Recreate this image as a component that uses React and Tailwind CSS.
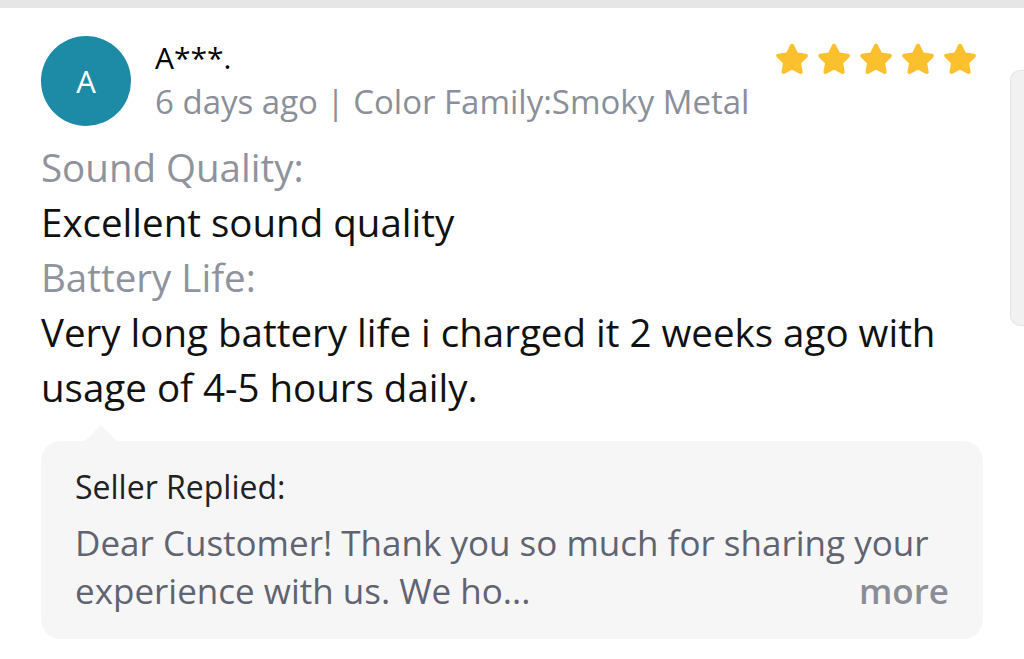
import React from 'react';

const FONT = { fontFamily: '"Open Sans", "Noto Sans", Arial, sans-serif' };

function Star() {
  return (
    <svg viewBox="0 0 24 24" className="w-[40px] h-[40px]" fill="#fbc02d">
      <path d="M12 2.2c.5 0 .9.3 1.1.7l2.3 4.6 5.1.8c1 .1 1.4 1.3.7 2l-3.7 3.6.9 5.1c.2 1-.9 1.7-1.7 1.2L12 17.8l-4.6 2.4c-.9.5-1.9-.3-1.7-1.2l.9-5.1-3.7-3.6c-.7-.7-.3-1.9.7-2l5.1-.8 2.2-4.6c.2-.4.6-.7 1.1-.7z" />
    </svg>
  );
}

export default function App() {
  return (
    <div className="relative w-[1024px] h-[659px] bg-white overflow-hidden" style={FONT}>
      <div className="h-[8px] bg-[#e6e6e6]" />

      {/* peeking panel on the right edge */}
      <div className="absolute left-[1010px] top-[70px] w-[40px] h-[256px] bg-[#f1f1f1] border border-[#e4e4e4] rounded-[10px]" />

      <div className="pl-[41px] pr-[41px] pt-[28px]">
        {/* header */}
        <div className="flex items-start">
          <div className="w-[90px] h-[90px] rounded-full bg-[#1d8ba6] flex items-center justify-center text-white text-[31px] shrink-0">
            A
          </div>
          <div className="ml-[24px] flex-1">
            <div className="text-[30px] text-black leading-[40px] mt-[2px]">A***.</div>
            <div className="text-[33px] text-[#8a8f99] leading-[40px] mt-[4px]">6 days ago | Color Family:Smoky Metal</div>
          </div>
          <div className="flex gap-[2px] mt-[4px] mr-[3px]">
            <Star /><Star /><Star /><Star /><Star />
          </div>
        </div>

        {/* review body */}
        <div className="mt-[14px] text-[38.5px] leading-[55px]">
          <div className="text-[#8e939d]">Sound Quality:</div>
          <div className="text-[#111]">Excellent sound quality</div>
          <div className="text-[#8e939d]">Battery Life:</div>
          <div className="text-[#111] pr-[20px]">Very long battery life i charged it 2 weeks ago with usage of 4-5 hours daily.</div>
        </div>

        {/* seller reply */}
        <div className="relative mt-[26px] bg-[#f6f6f7] rounded-[20px] px-[34px] pt-[27px] pb-[24px]">
          <div className="absolute -top-[16px] left-[44px] w-0 h-0 border-l-[16px] border-r-[16px] border-b-[16px] border-l-transparent border-r-transparent border-b-[#f6f6f7]" />
          <div className="text-[32px] text-[#222] leading-[38px]">Seller Replied:</div>
          <div className="mt-[13px] text-[35px] text-[#5f6470] leading-[48px]">
            <div className="whitespace-nowrap">Dear Customer! Thank you so much for sharing your</div>
            <div className="flex justify-between">
              <span>experience with us. We ho...</span>
              <span className="font-semibold text-[#8a8d96]">more</span>
            </div>
          </div>
        </div>
      </div>
    </div>
  );
}
